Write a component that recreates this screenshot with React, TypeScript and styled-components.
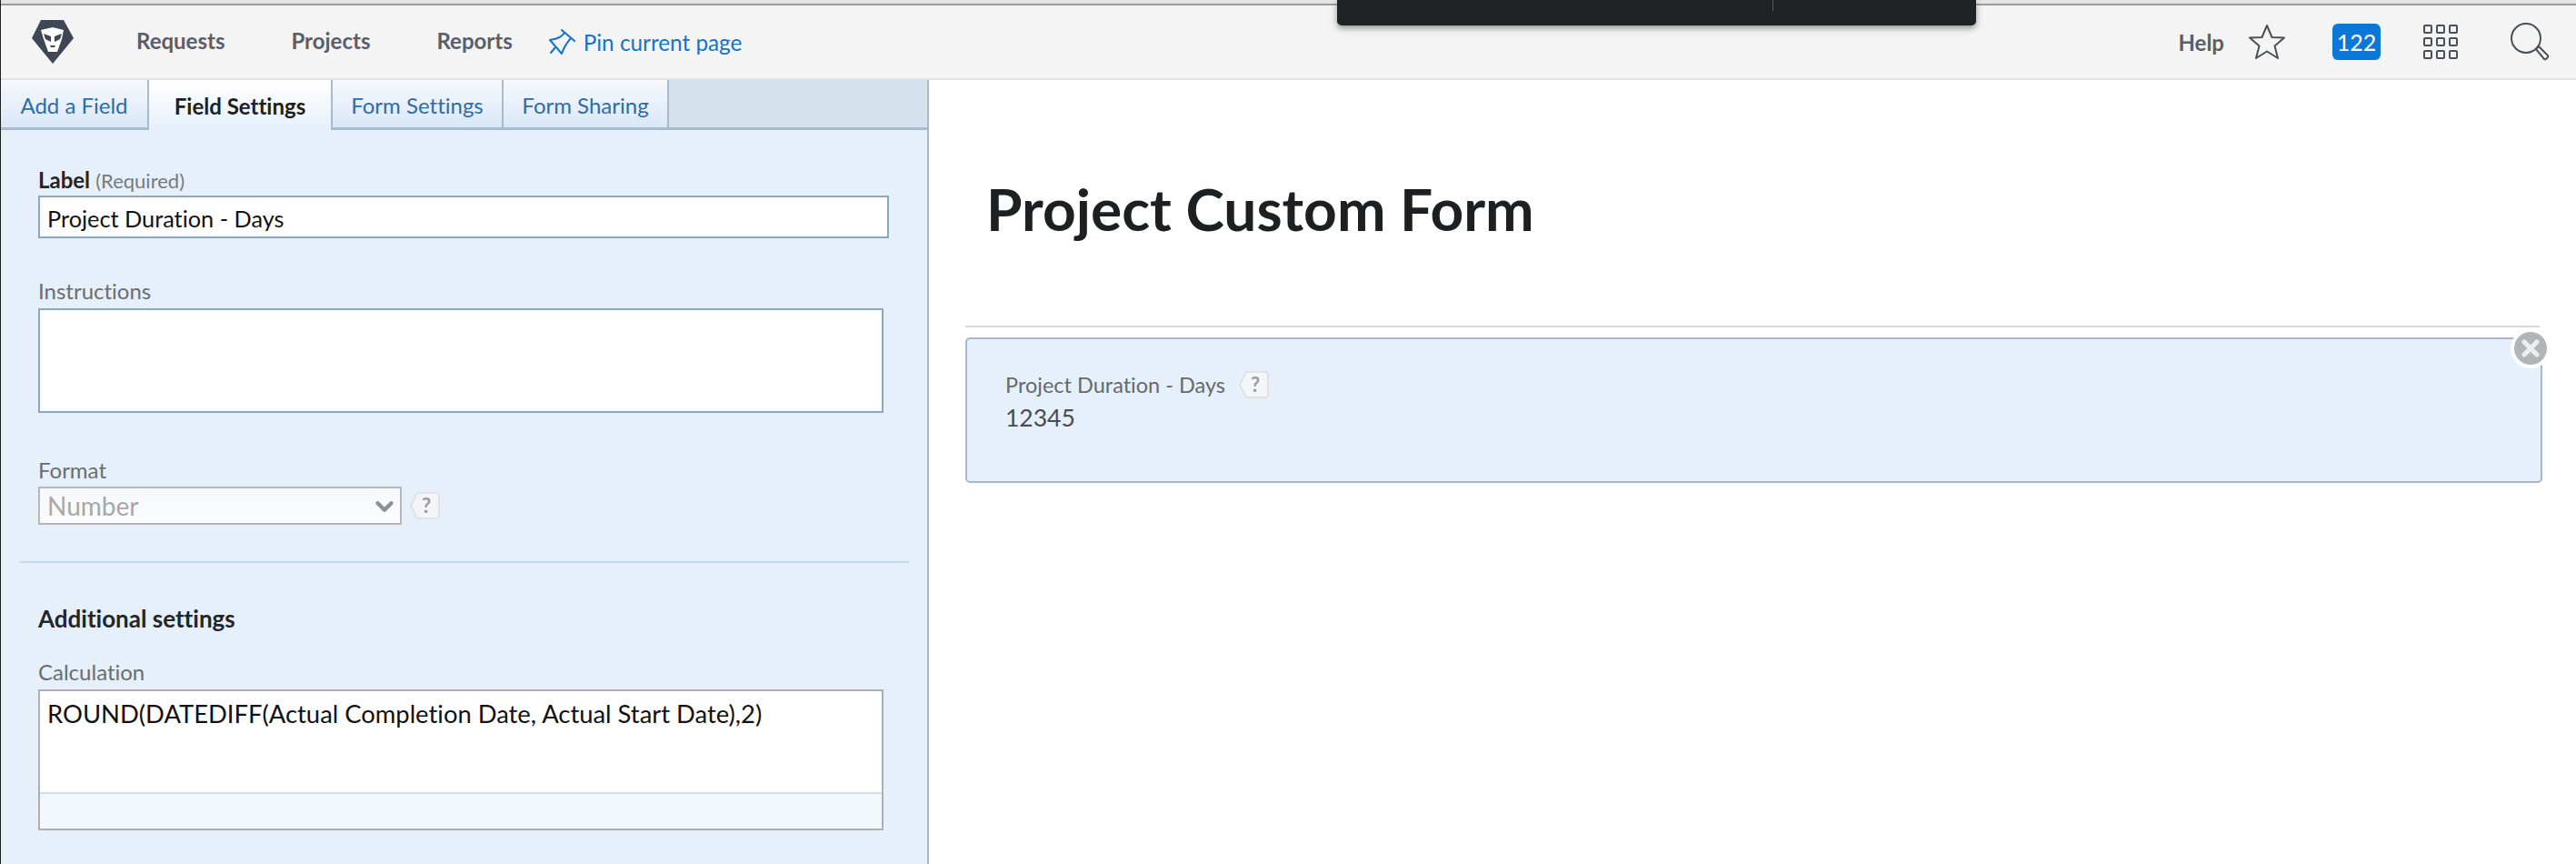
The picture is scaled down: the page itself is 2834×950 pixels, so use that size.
import styled, { createGlobalStyle } from 'styled-components';
import { ChevronDown, X } from 'lucide-react';

const GlobalStyle = createGlobalStyle`
  html, body {
    margin: 0;
    padding: 0;
    background: #ffffff;
    font-family: Lato, "Open Sans", sans-serif;
    font-variant-ligatures: none;
  }
  * { box-sizing: border-box; }
`;

const Page = styled.div`
  position: relative;
  width: 2834px;
  height: 950px;
  overflow: hidden;
  display: flex;
  flex-direction: column;
  border-left: 1px solid #222;
`;

const TopStrip = styled.div`
  height: 6px;
  flex: none;
  background: #e4e4e4;
  border-bottom: 2px solid #9c9c9c;
`;

const RecorderBar = styled.div`
  position: absolute;
  left: 1470px;
  top: 0;
  width: 703px;
  height: 28px;
  background: #212226;
  border-radius: 0 0 5px 5px;
  box-shadow: 0 3px 7px rgba(60, 65, 60, 0.55);

  &::after {
    content: '';
    position: absolute;
    left: 479px;
    top: 0;
    width: 1px;
    height: 12px;
    background: #5a5a5a;
  }
`;

const Header = styled.header`
  height: 82px;
  flex: none;
  display: flex;
  align-items: center;
  background: #f4f4f4;
  border-bottom: 2px solid #e2e2e2;
  padding: 0 30px 0 34px;
`;

const Logo = styled.svg`
  width: 46px;
  height: 48px;
  margin-right: 69px;
  flex: none;
`;

const NavLink = styled.a<{ $gap: number }>`
  font-size: 24px;
  font-weight: 700;
  color: #595e6a;
  margin-right: ${(p) => p.$gap}px;
  margin-top: -4px;
`;

const PinLink = styled.a`
  display: flex;
  align-items: center;
  gap: 8px;
  font-size: 24.3px;
  color: #1473cc;
`;

const HeaderRight = styled.div`
  margin-left: auto;
  display: flex;
  align-items: center;
`;

const HelpLink = styled.a`
  font-size: 24px;
  font-weight: 700;
  color: #595e6a;
  margin-right: 26px;
`;

const Badge = styled.span`
  width: 53px;
  height: 40px;
  border-radius: 6px;
  background: #0b78d8;
  color: #fff;
  font-size: 25px;
  display: flex;
  align-items: center;
  justify-content: center;
  margin: 0 47px 0 51px;
`;

const HeaderIcon = styled.svg<{ $right: number }>`
  flex: none;
  margin-right: ${(p) => p.$right}px;
`;

const Content = styled.div`
  flex: 1;
  display: flex;
  min-height: 0;
`;

const Sidebar = styled.aside`
  width: 1021px;
  flex: none;
  background: #e6f0fa;
  border-right: 2px solid #a9b8cf;
  display: flex;
  flex-direction: column;
`;

const Tabs = styled.nav`
  display: flex;
  height: 55px;
  flex: none;
  background: #d5e2ee;
`;

const Tab = styled.a<{ $active?: boolean; $width: number }>`
  width: ${(p) => p.$width}px;
  display: flex;
  align-items: center;
  justify-content: center;
  padding-top: 2px;
  font-size: 24px;
  color: ${(p) => (p.$active ? '#1d1f22' : '#2f6ca8')};
  font-weight: ${(p) => (p.$active ? 700 : 400)};
  background: ${(p) =>
    p.$active
      ? 'linear-gradient(#ffffff, #e6f0fa)'
      : 'linear-gradient(#f6f9fd, #dae7f8)'};
  border-right: 2px solid #a9bacf;
  border-bottom: ${(p) => (p.$active ? 'none' : '3px solid #a9bacf')};
`;

const TabFiller = styled.div`
  flex: 1;
  border-bottom: 3px solid #a9bacf;
`;

const Form = styled.div`
  display: flex;
  flex-direction: column;
  padding: 0 0 0 41px;
`;

const FieldLabel = styled.label<{ $top: number }>`
  display: block;
  margin-top: ${(p) => p.$top}px;
  font-size: 24px;
  line-height: 30px;
  height: 30px;
  color: #6a6d70;
`;

const StrongLabel = styled.strong`
  color: #22252a;
`;

const Required = styled.span`
  font-size: 22px;
  color: #777a7e;
`;

const TextInput = styled.input`
  display: block;
  width: 936px;
  height: 47px;
  padding: 2px 8px 0;
  margin-top: 2px;
  background: #fff;
  border: 2px solid #8ea7c0;
  font: 25.3px Lato, sans-serif;
  font-variant-ligatures: none;
  color: #111;
  outline: none;
`;

const AreaBox = styled.div<{ $height: number; $grey?: boolean }>`
  width: 930px;
  height: ${(p) => p.$height}px;
  margin-top: 4px;
  background: #fff;
  border: 2px solid ${(p) => (p.$grey ? '#adb0b3' : '#8ea7c0')};
  display: flex;
  flex-direction: column;
`;

const AreaText = styled.div`
  flex: 1;
  padding: 9px 8px;
  font-size: 27.4px;
  line-height: 32px;
  color: #111;
`;

const AreaFooter = styled.div`
  height: 40px;
  flex: none;
  background: #f3f8fd;
  border-top: 2px solid #d3e0ec;
`;

const SelectRow = styled.div`
  display: flex;
  align-items: center;
  gap: 8px;
  margin-top: 3px;
`;

const SelectBox = styled.div`
  position: relative;
  width: 400px;
  height: 42px;
  border: 2px solid #b5b7b9;
  background: linear-gradient(#f6f9fc, #fbfcfe);
  display: flex;
  align-items: center;
  padding: 0 8px;
  font-size: 28px;
  color: #a6a8aa;
`;

const SelectArrow = styled(ChevronDown)`
  position: absolute;
  right: 2px;
  top: 5px;
  color: #8d8f92;
`;

const Divider = styled.hr`
  width: 978px;
  height: 2px;
  margin: 40px 0 0 -20px;
  border: none;
  background: #c3d9ee;
`;

const Section = styled.h3`
  margin: 45px 0 0;
  font-size: 26px;
  line-height: 32px;
  font-weight: 700;
  color: #22252a;
`;

const Main = styled.main`
  flex: 1;
  min-width: 0;
  padding: 0 37px 0 40px;
  display: flex;
  flex-direction: column;
`;

const Title = styled.h1`
  margin: 0 0 0 23px;
  padding-top: 105px;
  height: 270px;
  font-size: 64px;
  line-height: 74px;
  font-weight: 700;
  color: #1d1f22;
  border: none;
`;

const Rule = styled.div`
  height: 2px;
  background: #d6d6d6;
  margin-right: 3px;
`;

const Card = styled.section`
  position: relative;
  margin-top: 11px;
  height: 160px;
  background: #e6f0fa;
  border: 2px solid #a9b6cc;
  border-radius: 5px;
  padding: 35px 42px;
`;

const CardLabelRow = styled.div`
  display: flex;
  align-items: center;
  gap: 14px;
  font-size: 23.5px;
  line-height: 30px;
  color: #66696d;
`;

const CardValue = styled.div`
  margin-top: 5px;
  font-size: 26.5px;
  line-height: 32px;
  color: #4a4c50;
`;

const CloseButton = styled.button`
  position: absolute;
  right: -11px;
  top: -12px;
  width: 44px;
  height: 44px;
  padding: 0;
  display: flex;
  align-items: center;
  justify-content: center;
  border-radius: 50%;
  background: #b2b4b6;
  color: #eee;
  border: 4px solid #fff;
`;

const HelpShape = styled.svg`
  width: 34px;
  height: 30px;
  flex: none;
`;

const HelpTag = () => (
  <HelpShape viewBox="0 0 34 30">
    <path
      d="M9 1 H30 a3 3 0 0 1 3 3 V26 a3 3 0 0 1 -3 3 H9 L2 15 Z"
      fill="#f4f5f6"
      stroke="#dcdde0"
      strokeWidth="1.5"
    />
    <text x="19" y="23" textAnchor="middle" fontFamily="Lato, sans-serif" fontWeight="700" fontSize="22" fill="#9a9c9f">
      ?
    </text>
  </HelpShape>
);

const App = () => (
  <Page>
    <GlobalStyle />
    <TopStrip />
    <RecorderBar />
    <Header>
      <Logo viewBox="0 0 46 48">
        <path d="M10 0 H35 L46 20 L23 48 L0 20 Z" fill="#3f4654" />
        <path d="M10 11 L23 8 L35 11 L33 21 L28 35 H18 L13 21 Z" fill="#fff" />
        <path
          d="M13 15 L21 18 L21 24 L15 21 Z M33 15 L25 18 L25 24 L31 21 Z M20 28 H26 L25 30 H21 Z"
          fill="#3f4654"
        />
      </Logo>
      <NavLink $gap={73}>Requests</NavLink>
      <NavLink $gap={73}>Projects</NavLink>
      <NavLink $gap={40}>Reports</NavLink>
      <PinLink>
        <svg width="30" height="28" viewBox="0 0 30 28" fill="none" stroke="#1473cc" strokeWidth="2" strokeLinejoin="round" strokeLinecap="round">
          <path d="M14 1 L28 13" />
          <path d="M17 4 Q14 10 1 12 L14 27 Q17 18 24 10" />
          <path d="M7 20 L2 26" />
        </svg>
        Pin current page
      </PinLink>
      <HeaderRight>
        <HelpLink>Help</HelpLink>
        <svg width="42" height="40" viewBox="0 0 42 40" fill="none" stroke="#4a4f5a" strokeWidth="2" strokeLinejoin="round">
          <path d="M21 2 L26.5 15 L40 15.5 L29.5 24.5 L33 38 L21 30.5 L9 38 L12.5 24.5 L2 15.5 L15.5 15 Z" />
        </svg>
        <Badge>122</Badge>
        <HeaderIcon $right={58} width="38" height="38" viewBox="0 0 38 38" fill="none" stroke="#4a4f5a" strokeWidth="2">
          {[0, 14, 28].map((y) =>
            [0, 14, 28].map((x) => <rect key={`${x}_${y}`} x={x + 1} y={y + 1} width="8" height="8" rx="1" />),
          )}
        </HeaderIcon>
        <HeaderIcon $right={0} width="42" height="42" viewBox="0 0 42 42" fill="none" stroke="#4a4f5a" strokeWidth="2">
          <circle cx="17" cy="17" r="16" />
          <path d="M28 29 L31 26 L41 36 Q41.5 37 41 38 L39 40 Q38 40.5 37 40 Z" />
        </HeaderIcon>
      </HeaderRight>
    </Header>
    <Content>
      <Sidebar>
        <Tabs>
          <Tab $width={163}>Add a Field</Tab>
          <Tab $width={202} $active>
            Field Settings
          </Tab>
          <Tab $width={188}>Form Settings</Tab>
          <Tab $width={182}>Form Sharing</Tab>
          <TabFiller />
        </Tabs>
        <Form>
          <FieldLabel $top={40}>
            <StrongLabel>Label</StrongLabel> <Required>(Required)</Required>
          </FieldLabel>
          <TextInput readOnly value="Project Duration - Days" />
          <FieldLabel $top={43}>Instructions</FieldLabel>
          <AreaBox $height={115} />
          <FieldLabel $top={48}>Format</FieldLabel>
          <SelectRow>
            <SelectBox>
              Number
              <SelectArrow size={30} strokeWidth={3.5} />
            </SelectBox>
            <HelpTag />
          </SelectRow>
          <Divider />
          <Section>Additional settings</Section>
          <FieldLabel $top={28}>Calculation</FieldLabel>
          <AreaBox $height={155} $grey>
            <AreaText>ROUND(DATEDIFF(Actual Completion Date, Actual Start Date),2)</AreaText>
            <AreaFooter />
          </AreaBox>
        </Form>
      </Sidebar>
      <Main>
        <Title>Project Custom Form</Title>
        <Rule />
        <Card>
          <CardLabelRow>
            Project Duration - Days
            <HelpTag />
          </CardLabelRow>
          <CardValue>12345</CardValue>
          <CloseButton>
            <X size={28} strokeWidth={4.5} />
          </CloseButton>
        </Card>
      </Main>
    </Content>
  </Page>
);

export default App;
